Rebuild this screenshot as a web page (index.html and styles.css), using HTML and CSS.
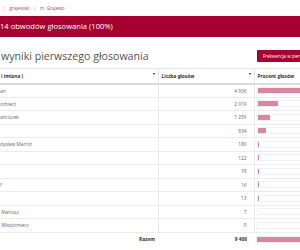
FILE: index.html
```html
<!DOCTYPE html>
<html lang="pl">
  <head>
    <meta charset="utf-8" />
    <title>Wyniki głosowania - m. Grajewo</title>
    <link rel="stylesheet" href="styles.css">
  </head>
  <body>
    <nav class="crumbs">
      <span class="sep">|</span>
      <a href="#">grajewski</a>
      <span class="sep">|</span>
      <a href="#">m. Grajewo</a>
    </nav>

    <div class="banner">14 obwodów głosowania (100%)</div>

    <div class="section-head">
      <h2>wyniki pierwszego głosowania</h2>
      <button type="button" class="btn">Frekwencja w pierwszym głosowaniu</button>
    </div>

    <table class="results">
      <colgroup>
        <col class="c-name">
        <col class="c-votes">
        <col class="c-pct">
      </colgroup>
      <thead>
        <tr>
          <th class="sortable">i imiona )</th>
          <th class="sortable">Liczba głosów</th>
          <th>Procent głosów</th>
        </tr>
      </thead>
      <tbody>
        <tr><td>an</td><td class="num">4 936</td><td><div class="track"><div class="bar" style="width: 52.48%"></div></div></td></tr>
        <tr><td>zimierz</td><td class="num">2 019</td><td><div class="track"><div class="bar" style="width: 21.46%"></div></div></td></tr>
        <tr><td>anciszek</td><td class="num">1 256</td><td><div class="track"><div class="bar" style="width: 13.35%"></div></div></td></tr>
        <tr><td></td><td class="num">834</td><td><div class="track"><div class="bar" style="width: 8.87%"></div></div></td></tr>
        <tr><td>dysław Marcin</td><td class="num">180</td><td><div class="track"><div class="bar" style="width: 1.91%"></div></div></td></tr>
        <tr><td></td><td class="num">122</td><td><div class="track"><div class="bar" style="width: 1.3%"></div></div></td></tr>
        <tr><td></td><td class="num">18</td><td><div class="track"><div class="bar" style="width: 0.19%"></div></div></td></tr>
        <tr><td>f</td><td class="num">16</td><td><div class="track"><div class="bar" style="width: 0.17%"></div></div></td></tr>
        <tr><td></td><td class="num">13</td><td><div class="track"><div class="bar" style="width: 0.14%"></div></div></td></tr>
        <tr><td>&nbsp;Mariusz</td><td class="num">7</td><td><div class="track"><div class="bar" style="width: 0.07%"></div></div></td></tr>
        <tr><td>&nbsp;Włodzimierz</td><td class="num">5</td><td><div class="track"><div class="bar" style="width: 0.05%"></div></div></td></tr>
      </tbody>
      <tfoot>
        <tr><td class="total-label">Razem</td><td class="num">9 406</td><td><div class="track"><div class="bar" style="width: 100%"></div></div></td></tr>
      </tfoot>
    </table>
  </body>
</html>
```

FILE: styles.css
```css
* {
  margin: 0;
  padding: 0;
  box-sizing: border-box;
}

html, body {
  overflow: hidden;
}

body {
  width: 300px;
  font-family: 'Open Sans', 'DejaVu Sans', sans-serif;
  color: #555;
  background: #fff;
}

/* breadcrumbs */
.crumbs {
  height: 16px;
  display: flex;
  align-items: center;
  gap: 4px;
  padding-left: 3px;
  font-size: 4.6px;
}

.crumbs a {
  color: #a0505e;
  text-decoration: none;
}

.crumbs .sep {
  color: #c08a94;
}

.banner {
  height: 21px;
  line-height: 21px;
  background: #a50030;
  color: #fff;
  font-size: 7.6px;
  white-space: nowrap;
}

.section-head {
  display: flex;
  justify-content: space-between;
  align-items: center;
  height: 31px;
  padding-top: 6px;
}

.section-head h2 {
  font-size: 10.6px;
  font-weight: 400;
  color: #555;
  white-space: nowrap;
  padding-left: 1px;
}

/* the page is wider than the frame, so the button runs past the right edge */
.btn {
  flex-shrink: 0;
  width: 90px;
  height: 12px;
  margin-right: -47px;
  background: #a50030;
  color: #fff;
  border: none;
  border-radius: 1px;
  font-family: inherit;
  font-size: 4.4px;
  text-align: left;
  padding-left: 6px;
  white-space: nowrap;
  overflow: hidden;
}

/* table */
.results {
  width: 356px;
  table-layout: fixed;
  border-collapse: collapse;
  font-size: 4.8px;
  color: #666;
}

.c-name { width: 158px; }
.c-votes { width: 96px; }

.results th {
  height: 15px;
  text-align: left;
  font-weight: 700;
  color: #333;
  border-top: 1px solid #e4e4e4;
  border-bottom: 2px solid #ddd;
  padding-left: 3px;
  position: relative;
}

.results th:first-child {
  padding-left: 1px;
}

.results th + th {
  border-left: 1px solid #e8e8e8;
}

.results th.sortable::after {
  content: "";
  position: absolute;
  right: 3px;
  top: 4px;
  border-left: 1.5px solid transparent;
  border-right: 1.5px solid transparent;
  border-top: 2px solid #222;
}

.results td {
  height: 13.5px;
  border-bottom: 1px solid #ececec;
  white-space: nowrap;
  overflow: hidden;
}

.results td + td {
  border-left: 1px solid #ececec;
}

.results .num {
  text-align: right;
  padding-right: 7px;
}

.results td:last-child {
  padding-left: 2px;
}

.track {
  width: 98px;
  height: 7px;
  border: 1px solid #f0f0f0;
  background: #fff;
}

.bar {
  height: 100%;
  background: #d9879f;
}

.results tfoot td {
  font-weight: 700;
  color: #333;
  border-bottom: none;
}

.results tfoot td + td {
  border-left: none;
}

.results .total-label {
  text-align: right;
  padding-right: 3px;
}
```
